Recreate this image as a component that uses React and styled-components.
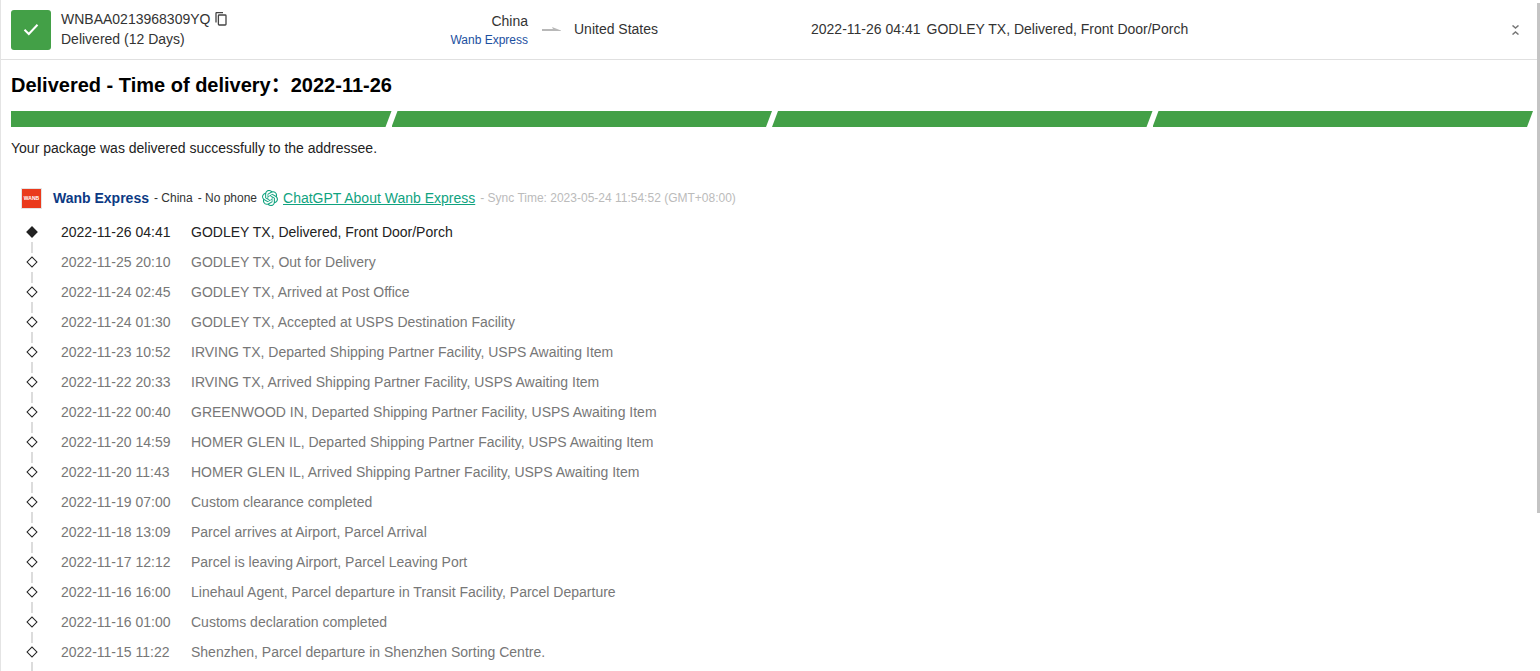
import React from "react";
import styled, { createGlobalStyle } from "styled-components";
import { SiOpenai } from "react-icons/si";

const Global = createGlobalStyle`
  html, body { margin: 0; padding: 0; height: 671px; overflow: hidden; background: #fff; }
  body { font-family: "Liberation Sans", Arial, sans-serif; font-size: 14px; color: #333; }
  * { box-sizing: border-box; }
`;

const Page = styled.div`
  display: flex;
  height: 671px;
  overflow: hidden;
  border-left: 1px solid #e4e4e4;
`;
const Main = styled.div`
  flex: 1;
  min-width: 0;
`;
const Scrollbar = styled.div`
  width: 3px;
  flex: none;
  height: 671px;
  padding-top: 3px;
`;
const Thumb = styled.div`
  height: 510px;
  background: #c4c4c4;
`;
const Header = styled.header`
  display: flex;
  align-items: center;
  height: 60px;
  border-bottom: 1px solid #e0e0e0;
  padding-left: 10px;
`;
const StatusBadge = styled.div`
  width: 40px;
  height: 40px;
  border-radius: 3px;
  background: #43a047;
  display: flex;
  align-items: center;
  justify-content: center;
  flex: none;
`;
const NumberBlock = styled.div`
  width: 390px;
  padding-left: 10px;
  margin-bottom: 2px;
  flex: none;
`;
const NumberRow = styled.div`
  display: flex;
  align-items: center;
  gap: 5px;
  height: 20px;
  line-height: 20px;
  color: #333;
`;
const StatusText = styled.div`
  line-height: 20px;
  color: #333;
`;
const Route = styled.div`
  display: flex;
  align-items: center;
  width: 370px;
  flex: none;
`;
const Origin = styled.div`
  width: 87px;
  text-align: right;
  flex: none;
`;
const OriginCountry = styled.div`
  line-height: 20px;
  color: #333;
`;
const Carrier = styled.div`
  font-size: 12px;
  line-height: 16px;
  color: #1c4fa0;
  margin-top: 1px;
  white-space: nowrap;
`;
const ArrowWrap = styled.div`
  width: 46px;
  display: flex;
  justify-content: center;
  flex: none;
  padding-left: 1px;
  margin-top: 1px;
`;
const Destination = styled.span`
  margin-bottom: 2px;
`;
const Latest = styled.div`
  display: flex;
  gap: 6px;
  flex: 1;
  color: #333;
  margin-bottom: 2px;
`;
const Collapse = styled.div`
  width: 25px;
  flex: none;
  display: flex;
`;
const Body = styled.div`
  padding: 0 4px 0 10px;
`;
const Title = styled.h1`
  margin: 0;
  padding-top: 14px;
  font-family: "Liberation Sans", "Noto Sans CJK SC", Arial, sans-serif;
  font-size: 20px;
  line-height: 22px;
  font-weight: 700;
  color: #000;
  white-space: pre;
`;
const Progress = styled.div`
  display: grid;
  grid-template-columns: repeat(4, 1fr);
  margin-top: 15px;
  height: 16px;
`;
const Segment = styled.div`
  height: 16px;
  background: #43a047;
  clip-path: ${p =>
    p.$first
      ? "polygon(0 0, 100% 0, calc(100% - 6px) 100%, 0 100%)"
      : "polygon(6px 0, 100% 0, calc(100% - 6px) 100%, 0 100%)"};
`;
const Note = styled.p`
  margin: 13px 0 0;
  line-height: 16px;
  color: #222;
`;
const Provider = styled.div`
  display: flex;
  align-items: center;
  margin-top: 32px;
  padding-left: 10px;
  height: 20px;
  white-space: nowrap;
`;
const Logo = styled.div`
  width: 21px;
  height: 21px;
  background: #ea3a1c;
  border: 1px solid #e4e4e4;
  display: flex;
  align-items: center;
  justify-content: center;
  color: #fff;
  font-size: 5px;
  font-weight: 700;
  flex: none;
`;
const ProviderName = styled.span`
  margin-left: 11px;
  font-weight: 700;
  color: #0c3a84;
`;
const ProviderMeta = styled.span`
  margin-left: 5px;
  font-size: 12px;
  color: #333;
`;
const GptIcon = styled(SiOpenai)`
  margin-left: 5px;
  width: 16px;
  height: 16px;
  flex: none;
  color: #10a37f;
`;
const GptLink = styled.a`
  margin-left: 5px;
  color: #10a37f;
  text-decoration: underline;
`;
const Sync = styled.span`
  margin-left: 5px;
  font-size: 12px;
  color: #bbb;
`;
const Timeline = styled.ul`
  list-style: none;
  margin: 9px 0 0;
  padding: 0;
`;
const Event = styled.li`
  position: relative;
  display: flex;
  height: 30px;
  line-height: 20px;
  padding: 5px 0 5px 50px;
  color: ${p => (p.$current ? "#222" : "#777")};
  white-space: nowrap;
`;
const Rail = styled.span`
  position: absolute;
  left: 20px;
  top: 25px;
  width: 2px;
  height: 11px;
  background: #dcdcdc;
`;
const Marker = styled.span`
  position: absolute;
  left: 17px;
  top: 11px;
  width: 8px;
  height: 8px;
  transform: rotate(45deg);
  border: 1.5px solid #222;
  background: ${p => (p.$current ? "#222" : "#fff")};
  z-index: 1;
`;
const When = styled.span`
  width: 130px;
  flex: none;
`;

const events = [
  ["2022-11-26 04:41", "GODLEY TX, Delivered, Front Door/Porch"],
  ["2022-11-25 20:10", "GODLEY TX, Out for Delivery"],
  ["2022-11-24 02:45", "GODLEY TX, Arrived at Post Office"],
  ["2022-11-24 01:30", "GODLEY TX, Accepted at USPS Destination Facility"],
  ["2022-11-23 10:52", "IRVING TX, Departed Shipping Partner Facility, USPS Awaiting Item"],
  ["2022-11-22 20:33", "IRVING TX, Arrived Shipping Partner Facility, USPS Awaiting Item"],
  ["2022-11-22 00:40", "GREENWOOD IN, Departed Shipping Partner Facility, USPS Awaiting Item"],
  ["2022-11-20 14:59", "HOMER GLEN IL, Departed Shipping Partner Facility, USPS Awaiting Item"],
  ["2022-11-20 11:43", "HOMER GLEN IL, Arrived Shipping Partner Facility, USPS Awaiting Item"],
  ["2022-11-19 07:00", "Custom clearance completed"],
  ["2022-11-18 13:09", "Parcel arrives at Airport, Parcel Arrival"],
  ["2022-11-17 12:12", "Parcel is leaving Airport, Parcel Leaving Port"],
  ["2022-11-16 16:00", "Linehaul Agent, Parcel departure in Transit Facility, Parcel Departure"],
  ["2022-11-16 01:00", "Customs declaration completed"],
  ["2022-11-15 11:22", "Shenzhen, Parcel departure in Shenzhen Sorting Centre."],
];

export default function App() {
  return (
    <Page>
      <Global />
      <Main>
        <Header>
          <StatusBadge>
            <svg width="16" height="13" viewBox="0 0 16 13" fill="none">
              <path d="M1.500 6.800 L5.800 11 L14.500 1.800" stroke="#fff" strokeWidth="2" />
            </svg>
          </StatusBadge>
          <NumberBlock>
            <NumberRow>
              WNBAA0213968309YQ
              <svg width="12" height="14" viewBox="0 0 12 14" fill="none" stroke="#444" strokeWidth="1.300">
                <path d="M1 10.500V1.200A.6.6 0 0 1 1.600.6H8" />
                <rect x="3.400" y="3" width="7.600" height="10" rx=".8" />
              </svg>
            </NumberRow>
            <StatusText>Delivered (12 Days)</StatusText>
          </NumberBlock>
          <Route>
            <Origin>
              <OriginCountry>China</OriginCountry>
              <Carrier>Wanb Express</Carrier>
            </Origin>
            <ArrowWrap>
              <svg width="20" height="8" viewBox="0 0 20 8">
                <path d="M0 3H11L10 1L19 4.500V5H0Z" fill="#b8b8b8" />
              </svg>
            </ArrowWrap>
            <Destination>United States</Destination>
          </Route>
          <Latest>
            <span>2022-11-26 04:41</span>
            <span>GODLEY TX, Delivered, Front Door/Porch</span>
          </Latest>
          <Collapse>
            <svg width="7" height="10" viewBox="0 0 7 10" fill="none" stroke="#777" strokeWidth="1.500">
              <path d="M0.500 0.500L3.500 3L6.500 0.500M0.500 9.500L3.500 7L6.500 9.500" />
            </svg>
          </Collapse>
        </Header>
        <Body>
          <Title>Delivered - Time of delivery：2022-11-26</Title>
          <Progress>
            <Segment $first />
            <Segment />
            <Segment />
            <Segment />
          </Progress>
          <Note>Your package was delivered successfully to the addressee.</Note>
          <Provider>
            <Logo>WANB</Logo>
            <ProviderName>Wanb Express</ProviderName>
            <ProviderMeta>- China</ProviderMeta>
            <ProviderMeta>- No phone</ProviderMeta>
            <GptIcon />
            <GptLink href="#">ChatGPT About Wanb Express</GptLink>
            <Sync>- Sync Time: 2023-05-24 11:54:52 (GMT+08:00)</Sync>
          </Provider>
          <Timeline>
            {events.map(([when, text], i) => (
              <Event key={when} $current={i === 0}>
                <Rail />
                <Marker $current={i === 0} />
                <When>{when}</When>
                <span>{text}</span>
              </Event>
            ))}
          </Timeline>
        </Body>
      </Main>
      <Scrollbar>
        <Thumb />
      </Scrollbar>
    </Page>
  );
}
